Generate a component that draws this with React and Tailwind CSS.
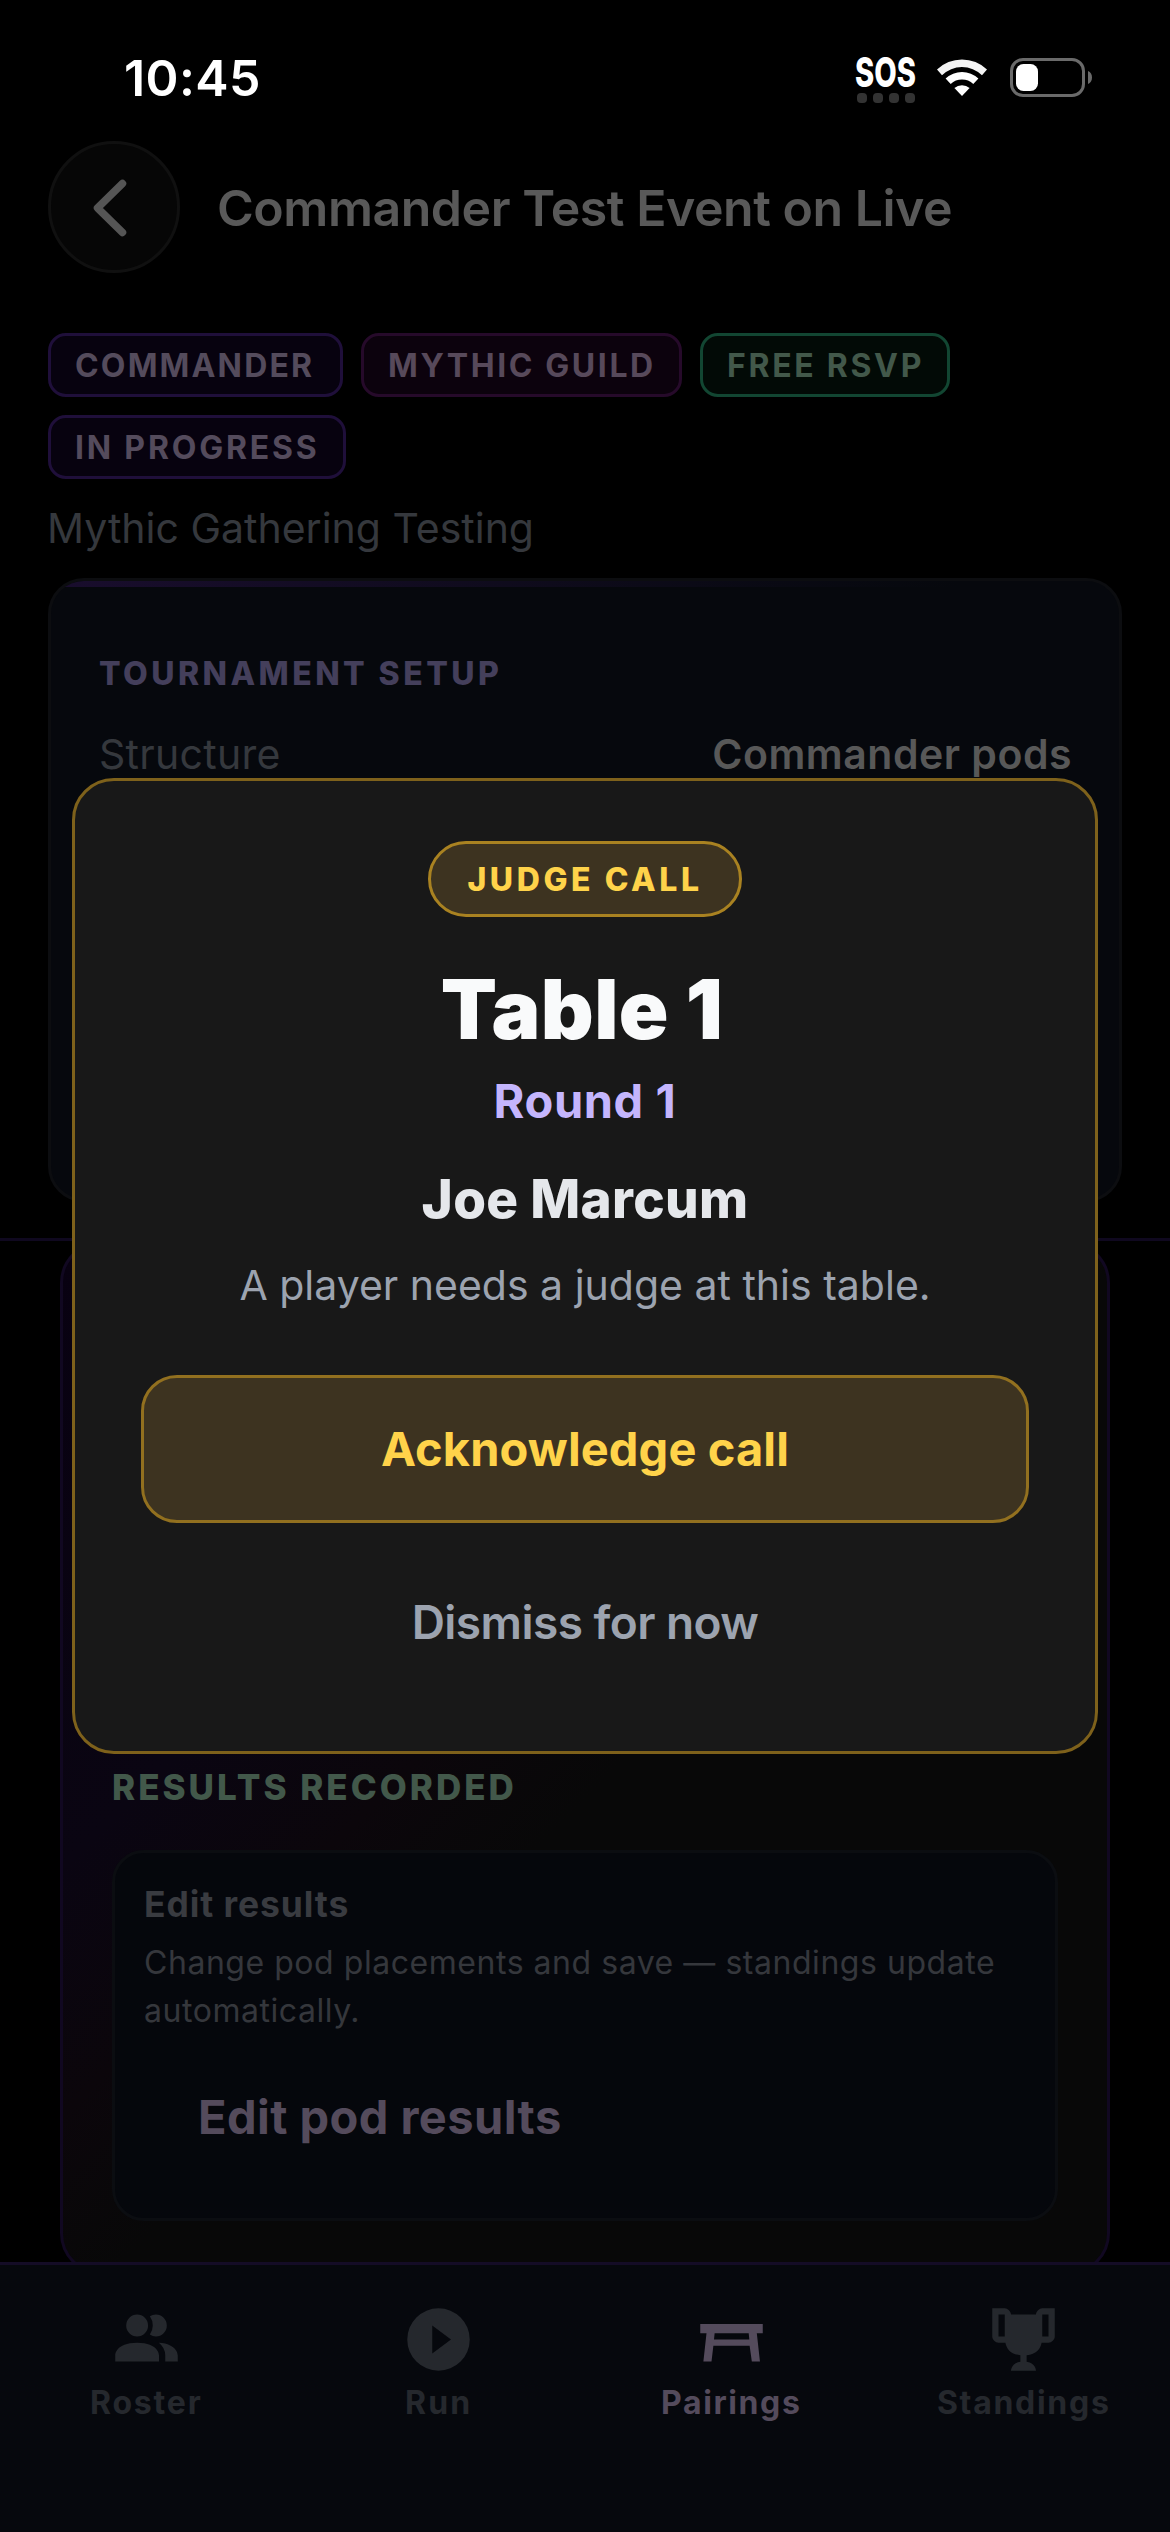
import React from 'react';

const TAGS = [
  { label: 'COMMANDER', className: 'w-[295px] tracking-[2.15px] border-[#1f0f3a] bg-[#07020f] text-[#544b5c]' },
  { label: 'MYTHIC GUILD', className: 'w-[321px] tracking-[2.6px] border-[#260a2a] bg-[#0c020d] text-[#57495a]' },
  { label: 'FREE RSVP', className: 'w-[250px] tracking-[2.7px] border-[#124632] bg-[#020a06] text-[#42584a]' },
  { label: 'IN PROGRESS', className: 'w-[298px] tracking-[2.8px] border-[#1f0f3a] bg-[#07020f] text-[#544b5c]' },
];

const TABS = [
  {
    label: 'Roster',
    tracking: 'tracking-[1.8px]',
    path: 'M16 17V19H2V17S2 13 9 13 16 17 16 17M12.5 7.5A3.5 3.5 0 1 0 9 11A3.5 3.5 0 0 0 12.5 7.5M15.94 13A5.32 5.32 0 0 1 18 17V19H22V17S22 13.37 15.94 13M15 4A3.39 3.39 0 0 0 13.07 4.59A5 5 0 0 1 13.07 10.41A3.39 3.39 0 0 0 15 11A3.5 3.5 0 0 0 15 4Z',
  },
  {
    label: 'Run',
    tracking: 'tracking-[2.2px]',
    path: 'M10 16.5V7.5L16 12M12 2A10 10 0 0 0 2 12A10 10 0 0 0 12 22A10 10 0 0 0 22 12A10 10 0 0 0 12 2Z',
  },
  {
    label: 'Pairings',
    tracking: 'tracking-[1.6px]',
    active: true,
    path: 'M22 7H2V10H4L3 19H5.6L6.2 14H17.8L18.5 19H21.1L20.1 10H22V7M6.4 12L6.6 10H17.5L17.7 12H6.4Z',
  },
  {
    label: 'Standings',
    tracking: 'tracking-[1.7px]',
    path: 'M18 2C17.1 2 16 3 16 4H8C8 3 6.9 2 6 2H2V11C2 12 3 13 4 13H6.2C6.6 15 7.9 16.7 11 17V19.08C8 19.54 8 22 8 22H16C16 22 16 19.54 13 19.08V17C16.1 16.7 17.4 15 17.8 13H20C21 13 22 12 22 11V2H18M6 11H4V4H6V11M20 11H18V4H20V11Z',
  },
];

function StatusBar() {
  return (
    <div className="flex h-[141px] items-start justify-between pl-[124px] pr-[78px]">
      <span className="mt-[48px] text-[50px] leading-[60px] font-semibold tracking-[0.4px] text-white">10:45</span>
      <div className="mt-[54px] flex items-start">
        <div className="w-[62px]">
          <div className="h-[39px] w-[62px]">
            <span className="block w-[90px] origin-top-left scale-x-[0.71] text-[41px] leading-[36px] font-extrabold text-white">SOS</span>
          </div>
          <div className="flex gap-[6px] pl-[2px]">
            {[0, 1, 2, 3].map((dot) => (
              <span key={dot} className="h-[10px] w-[10px] rounded-[4px] bg-[#333333]" />
            ))}
          </div>
        </div>
        <svg className="mt-[5px] ml-[20px] h-[37px] w-[50px]" viewBox="0 0 50 37">
          <path d="M0 10.6A36 36 0 0 1 50 10.6L45 16.2A28.5 28.5 0 0 0 5 16.2Z" fill="#f4f4f4" />
          <path d="M8.6 19.6A24 24 0 0 1 41.4 19.6L36.3 25A16.5 16.5 0 0 0 13.7 25Z" fill="#fff" />
          <path d="M17.4 29A11.6 11.6 0 0 1 32.6 29L25 37Z" fill="#fff" />
        </svg>
        <svg className="mt-[4px] ml-[23px] h-[39px] w-[82px]" viewBox="0 0 82 39">
          <rect x="1.5" y="1.5" width="72" height="36" rx="11.5" fill="none" stroke="#6a6a6a" strokeWidth="3" />
          <rect x="6" y="6" width="22" height="27" rx="7.5" fill="#fff" />
          <path d="M78 13C80.6 14 82 16.5 82 19.5S80.6 25 78 26Z" fill="#6a6a6a" />
        </svg>
      </div>
    </div>
  );
}

function JudgeCallModal() {
  return (
    <div className="absolute inset-x-[72px] top-[778px] flex h-[976px] flex-col items-center rounded-[42px] border-[3px] border-[#7e611b] bg-[#181818] px-[66px] pt-[60px]">
      <span className="flex h-[76px] w-[314px] items-center justify-center rounded-full border-[3px] border-[#a98221] bg-[#3d3320] pt-[2px] text-[32px] font-extrabold tracking-[3.57px] text-[#ffd34a]">
        JUDGE CALL
      </span>
      <h2 className="mt-[51px] mr-[6px] text-[82px] leading-[84px] font-black tracking-[0.4px] text-[#f9fafb]">Table 1</h2>
      <p className="mt-[21px] text-[47px] leading-[56px] font-bold tracking-[0.6px] text-[#c4b5fd]">Round 1</p>
      <p className="mt-[38px] text-[53px] leading-[64px] font-extrabold tracking-[0.3px] text-[#e5e7eb]">Joe Marcum</p>
      <p className="mt-[24px] text-[41px] leading-[60px] text-[#9ca3af]">A player needs a judge at this table.</p>
      <button className="mt-[60px] h-[148px] w-full rounded-[36px] border-[3px] border-[#92701f] bg-[#3d3320] text-[47px] font-bold tracking-[0.1px] text-[#ffd34a]">
        Acknowledge call
      </button>
      <button className="mt-[69px] text-[46px] leading-[60px] font-semibold tracking-[-0.54px] text-[#9ca3af]">
        Dismiss for now
      </button>
    </div>
  );
}

export default function App() {
  return (
    <div className="relative flex h-[2532px] w-[1170px] flex-col overflow-hidden bg-black font-[Inter,sans-serif]">
      <StatusBar />

      {/* Header */}
      <div className="flex h-[132px] shrink-0 items-center pl-[48px]">
        <button className="flex h-[132px] w-[132px] items-center justify-center rounded-full border-[3px] border-[#101010] bg-[#060606]">
          <svg className="mt-[2px] mr-[9px] h-[58px] w-[34px]" viewBox="0 0 34 58" fill="none" stroke="#555555" strokeWidth="7.5" strokeLinecap="round" strokeLinejoin="round">
            <path d="M29.5 4.5L4.5 29L29.5 53.5" />
          </svg>
        </button>
        <h1 className="mt-[2px] ml-[37px] text-[50px] leading-[60px] font-semibold tracking-[-0.47px] text-[#595959]">
          Commander Test Event on Live
        </h1>
      </div>

      {/* Event tags */}
      <div className="mt-[60px] flex shrink-0 flex-wrap gap-[18px] px-[48px]">
        {TAGS.map((tag) => (
          <span
            key={tag.label}
            className={`flex h-[64px] items-center rounded-[18px] border-[3px] pt-[2px] pl-[24px] text-[32px] font-bold whitespace-nowrap ${tag.className}`}
          >
            {tag.label}
          </span>
        ))}
      </div>
      <p className="mt-[19px] shrink-0 pl-[47px] text-[41px] leading-[60px] text-[#35383d]">Mythic Gathering Testing</p>

      {/* Tournament setup */}
      <section className="mx-[48px] mt-[20px] h-[624px] shrink-0 overflow-hidden rounded-[36px] border-[3px] border-[#0c0d10] bg-[#06080d]">
        <div className="h-[6px] bg-linear-to-r from-[#190d2d] to-[#06080d] to-85%" />
        <h3 className="mt-[67px] pl-[48px] text-[32px] leading-[40px] font-extrabold tracking-[3.44px] text-[#443f5b]">
          TOURNAMENT SETUP
        </h3>
        <div className="mt-[30px] flex justify-between pr-[47px] pl-[48px] text-[41px] leading-[60px]">
          <span className="tracking-[0.28px] text-[#35383d]">Structure</span>
          <span className="font-semibold tracking-[0.5px] text-[#585858]">Commander pods</span>
        </div>
      </section>

      <main className="mt-[36px] h-[1024px] shrink-0 overflow-hidden border-t-[3px] border-[#0f081f]">
        <div className="mx-[60px] h-[1034px] rounded-[42px] border-[3px] border-[#110821] bg-[linear-gradient(135deg,#080111_0%,#0a0512_30%,#0b060b_42%,#080808_52%,#080808_100%)] px-[49px] pt-[521px]">
          <h3 className="text-[35px] leading-[44px] font-extrabold tracking-[3px] text-[#42584a]">RESULTS RECORDED</h3>
          <div className="mt-[41px] h-[371px] rounded-[32px] border-[3px] border-[#0b0d11] bg-[#05070c] pt-[30px] pl-[29px]">
            <p className="text-[35.5px] leading-[44px] font-bold tracking-[0.9px] text-[#393b40]">Edit results</p>
            <p className="mt-[12px] text-[32px] leading-[48px] tracking-[0.54px] text-[#35373c]">
              Change pod placements and save — standings update
              <br />
              automatically.
            </p>
            <button className="mt-[52px] ml-[54px] block text-[47px] leading-[60px] font-bold tracking-[0.44px] text-[#544b5c]">
              Edit pod results
            </button>
          </div>
        </div>
      </main>

      {/* Tab bar */}
      <nav className="grid h-[270px] shrink-0 grid-cols-4 border-t-[3px] border-[#140c26] bg-[#06080d]">
        {TABS.map((tab) => (
          <div key={tab.label} className={`flex flex-col items-center pt-[37px] ${tab.active ? 'text-[#544b5c]' : 'text-[#25282d]'}`}>
            <svg className="h-[75px] w-[75px]" viewBox="0 0 24 24" fill="currentColor">
              <path fillRule="evenodd" d={tab.path} />
            </svg>
            <span className={`mt-[6px] text-[32px] leading-[40px] font-bold ${tab.tracking}`}>{tab.label}</span>
          </div>
        ))}
      </nav>

      <JudgeCallModal />
    </div>
  );
}
